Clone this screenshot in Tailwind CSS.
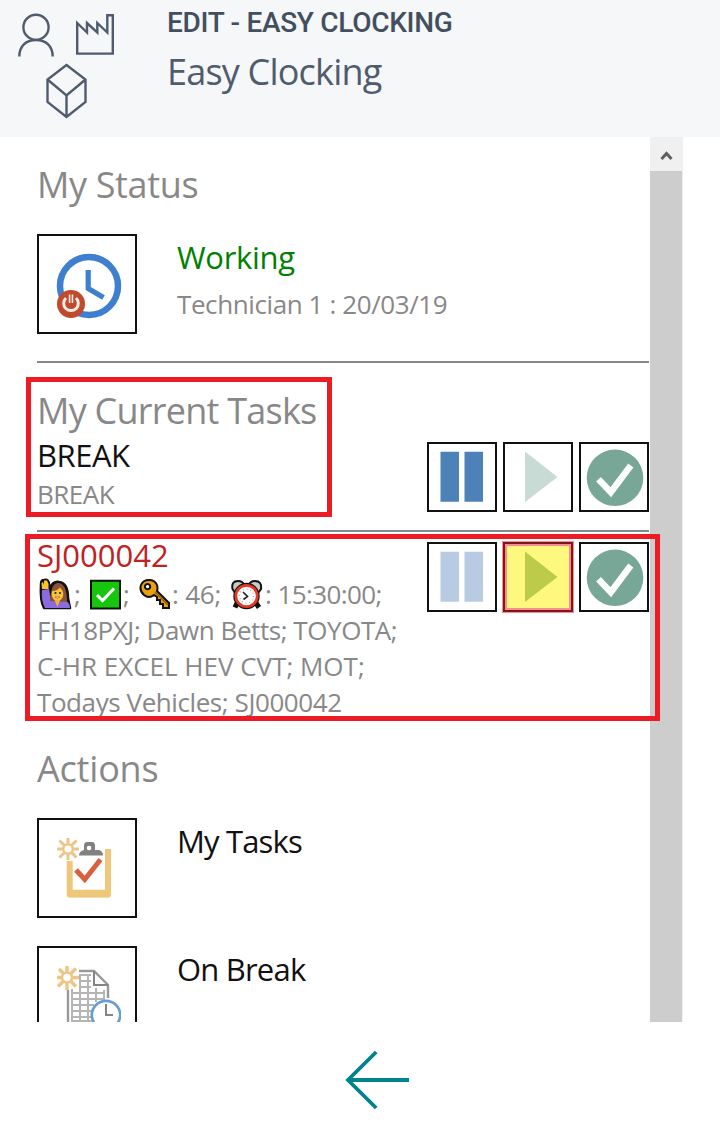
<!DOCTYPE html>
<html lang="en">
<head>
<meta charset="utf-8">
<title>Easy Clocking</title>
<script src="https://cdn.jsdelivr.net/npm/@tailwindcss/browser@4"></script>
</head>
<body class="bg-white">
<div class="relative flex h-[1127px] w-[720px] flex-col overflow-hidden font-['Open_Sans','Noto_Sans',sans-serif] whitespace-nowrap text-[#888]">
  <header class="flex h-[137px] shrink-0 bg-[#f5f7f9]">
    <svg class="w-[167px] shrink-0" height="137" viewBox="0 0 167 137" fill="none" stroke="#505c6d" stroke-width="2.4">
      <circle cx="36" cy="27.3" r="12.6"/><path d="M19.3 56.5C19.3 46 26 40 36 40S52.700 46 52.700 56.500"/>
      <path d="M77.200 53.600V23L87 32.500V23L97.300 32.500V23L107.300 32.500V15.200H112.800V53.600Z"/>
      <path d="M66.500 65L85.500 79.500V102L66.500 117L47.500 102V79.500ZM47.500 79.500L66.500 95.500L85.500 79.500M66.500 95.500V117"/>
    </svg>
    <div class="flex flex-col pt-[7px]">
      <div class="h-[32px] text-[28px] leading-[32px] font-medium tracking-[-0.3px] text-[#434f5f] font-['Roboto',sans-serif]">EDIT - EASY CLOCKING</div>
      <div class="mt-[9px] text-[36px] leading-[48px] tracking-[-0.8px] text-[#505c6d]">Easy Clocking</div>
    </div>
  </header>

  <div class="flex h-[885px] shrink-0 overflow-hidden">
    <main class="ml-[37px] w-[613px] pt-[24px] pr-px">
      <h2 class="text-[36px] leading-[48px] tracking-[-0.35px]">My Status</h2>
      <div class="mt-[25px] flex h-[100px]">
        <div class="size-[100px] border-2 border-[#111]">
          <svg width="96" height="96" viewBox="39 236 96 96" fill="none">
            <circle cx="89" cy="286" r="29" stroke="#3f7fcf" stroke-width="6.500"/>
            <path d="M88.200 270V288.500L103.500 297.500" stroke="#3f7fcf" stroke-width="5.200"/>
            <circle cx="71" cy="304" r="14" fill="#c04a2b"/><path d="M66 298A7.300 7.300 0 1 0 76 298" stroke="#fbeae5" stroke-width="3"/><path d="M71 294.500V303" stroke="#fbeae5" stroke-width="4.500"/><path d="M71 294V304" stroke="#c04a2b" stroke-width="1.300"/>
          </svg>
        </div>
        <div class="ml-[40px]">
          <div class="mt-[2px] text-[31px] leading-[42px] tracking-[-0.3px] text-[#008000]">Working</div>
          <div class="mt-[8px] text-[26px] leading-[36px] tracking-[-0.4px]">Technician 1 : 20/03/19</div>
        </div>
      </div>
      <hr class="mt-[27px] border-0 border-t-2 border-[#888]">

      <h2 class="-mb-px mt-[24px] text-[36px] leading-[48px] tracking-[-0.75px]">My Current Tasks</h2>
      <div class="flex h-[96px] justify-between">
        <div>
          <div class="text-[31px] leading-[42px] tracking-[-0.5px] text-[#111]">BREAK</div>
          <div class="text-[26px] leading-[36px] tracking-[-0.5px]">BREAK</div>
        </div>
        <div class="mt-[8px] flex gap-[6px]">
          <div class="size-[70px] border-2 border-[#111]"><svg width="66" height="66"><path d="M11.500 7.700H30V57.700H11.500ZM35.500 7.700H54V57.700H35.500Z" fill="#4d82b8"/></svg></div>
          <div class="size-[70px] border-2 border-[#111]"><svg width="66" height="66"><path d="M20 7.500L52.500 33L20 58Z" fill="#c8dbd5"/></svg></div>
          <div class="size-[70px] border-2 border-[#111]"><svg width="66" height="66" fill="none"><circle cx="34" cy="33.800" r="28.300" fill="#78a797"/><path d="M17.500 35.300L29.800 48.200L49.800 21.500" stroke="#fff" stroke-width="6.500"/></svg></div>
        </div>
      </div>
      <hr class="border-0 border-t-2 border-[#888]">

      <div class="flex h-[188px] justify-between pt-[2px]">
        <div>
          <div class="text-[31px] leading-[42px] text-[#c02222]">SJ000042</div>
          <div class="text-[26px] leading-[36px]">
            <div class="flex h-[36px]">
              <svg class="w-[37px] shrink-0" height="36" viewBox="37 576 37 36" stroke-linejoin="round">
                <path d="M41 584Q41 580 44 580Q49 579 49 585L50 588Q53 581 59 582Q68 583 68 598L70 608H44Q40 601 41 584Z" fill="#111" stroke="#111" stroke-width="2.500"/>
                <path d="M42 590L49 589L51 601L57 600L66 601Q70 603 70 608H45Q41 601 42 590Z" fill="#8a6be0"/>
                <path d="M42 589L41.500 583L43 582L44 585V580.500H47L48.500 584V589Z" fill="#fcc331"/>
                <path d="M50 601Q51 583 58 583Q67 583 67 602Z" fill="#8b5336"/>
                <ellipse cx="57.500" cy="594" rx="5.800" ry="7" fill="#fcc331"/><path d="M52 591Q58 591 60 587Q61 590 64 591Q62 584 57 585Q52 586 52 591Z" fill="#8b5336"/>
                <path d="M54.500 600H60L57.500 607Z" fill="#f5b52c"/><circle cx="55.500" cy="593" r="1.100" fill="#222"/><circle cx="60" cy="593" r="1.100" fill="#222"/><path d="M55 597Q57.500 600 60 597Z" fill="#fff" stroke="#843" stroke-width=".6"/>
              </svg><span class="w-[16px]">;</span>
              <svg class="w-[32px] shrink-0" height="36" viewBox="90 576 32 36"><path d="M91 580.800H120V608.500H91Z" fill="#16c60c" stroke="#111" stroke-width="2"/><path d="M97 595L102.500 600.500L114 588.500" fill="none" stroke="#fff" stroke-width="3"/></svg>
              <span class="ml-px w-[16px]">;</span>
              <svg class="w-[33px] shrink-0" height="36" viewBox="139 576 33 36"><path fill-rule="evenodd" d="M149 580Q155 580 157 585Q158 588 157 591L169 603V608H163V604H160V600H157V597L154 595Q149 599 144 595Q139 590 141 585Q143 580 149 580ZM147.500 584A2.600 2.600 0 1 0 147.600 584Z" fill="#e8a00e" stroke="#111" stroke-width="2"/><path d="M155 592L168 605" stroke="#935d05" stroke-width="1.500"/></svg>
              <span class="w-[59px] tracking-[-0.2px]">: 46;</span>
              <svg class="w-[32px] shrink-0" height="36" viewBox="231 576 32 36"><path d="M237 603L235 607.500M256 603L259 607.500" stroke="#111" stroke-width="5"/><path d="M232.500 589Q231 581 238 581Q243 581 244 585L235 593ZM261 589Q262 581 255 581Q250 581 249 585L258 593Z" fill="#c9c9c9" stroke="#111" stroke-width="2"/><circle cx="246.500" cy="596" r="10.700" fill="#fff" stroke="#111" stroke-width="5"/><circle cx="246.500" cy="596" r="10.700" fill="#fff" stroke="#e33a24" stroke-width="2.800"/><circle cx="246.500" cy="596" r="7" fill="none" stroke="#aaa" stroke-width="1.200" stroke-dasharray="1 2.660"/><path d="M243 592L247.500 596.500L243.500 599.500" fill="none" stroke="#222" stroke-width="1.600"/></svg>
              <span class="ml-[2px] tracking-[-0.6px]">: 15:30:00;</span>
            </div>
            <div class="tracking-[-0.44px]">FH18PXJ; Dawn Betts; TOYOTA;</div>
            <div>C-HR EXCEL HEV CVT; MOT;</div>
            <div class="tracking-[-0.42px]">Todays Vehicles; SJ000042</div>
          </div>
        </div>
        <div class="mt-[8px] flex gap-[6px]">
          <div class="size-[70px] border-2 border-[#111]"><svg width="66" height="66"><path d="M11.500 7.700H30V57.700H11.500ZM35.500 7.700H54V57.700H35.500Z" fill="#b8cbe3"/></svg></div>
          <div class="relative size-[70px] border-2 border-[#111]"><svg width="66" height="66"><path d="M20 7.500L52.500 33L20 58Z" fill="#79a694"/></svg>
            <div class="absolute -inset-[3px] border-[5px] border-[#ed1c24]/50 bg-[#fff200]/50 bg-clip-padding"></div>
          </div>
          <div class="size-[70px] border-2 border-[#111]"><svg width="66" height="66" fill="none"><circle cx="34" cy="33.800" r="28.300" fill="#78a797"/><path d="M17.500 35.300L29.800 48.200L49.800 21.500" stroke="#fff" stroke-width="6.500"/></svg></div>
        </div>
      </div>

      <h2 class="mt-[25px] text-[36px] leading-[48px] tracking-[-0.2px]">Actions</h2>
      <div class="mt-[25px] flex h-[100px]">
        <div class="size-[100px] border-2 border-[#111]">
          <svg width="96" height="96" viewBox="39 820 96 96" fill="none">
            <path d="M69.700 861V894.500H108V849" stroke="#eec77b" stroke-width="6" stroke-linejoin="round"/><path d="M68 893.500H110" stroke="#eec77b" stroke-width="7.500"/>
            <path d="M79 855.500Q79 851 84 850V846Q84 842 87 842H92Q95 842 95 846V850H99Q103 851 103 855.500Z" fill="#818181"/><circle cx="89" cy="848" r="2.300" fill="#fff"/>
            <path d="M76 870L84.800 879.500L100.500 859.500" stroke="#d9603f" stroke-width="5"/>
            <g stroke="#eec586" stroke-width="3"><circle cx="68" cy="849" r="4.800" stroke-width="2.500"/><path d="M68 838V845M68 853V860M57 849H64M72 849H79M59.500 840.500L65 846M71 852L76.500 857.500M76.500 840.500L71 846M65 852L59.500 857.500"/></g>
          </svg>
        </div>
        <div class="mt-[2px] ml-[40px] text-[31px] leading-[42px] tracking-[-0.85px] text-[#111]">My Tasks</div>
      </div>
      <div class="mt-[28px] flex h-[100px]">
        <div class="size-[100px] border-2 border-[#111]">
          <svg width="96" height="96" viewBox="39 948 96 96" fill="none">
            <path d="M79 971H94L108 985V998M68 990V1026" stroke="#999" stroke-width="2.400"/><path d="M94 971V985H108" stroke="#858585" stroke-width="2"/>
            <path d="M79 975H91M79 981H91M79 987H91M72 993H105M72 999H105M72 1005H94M72 1011H92M72 1017H92M72 1021H92M72 989V1024M80 975V1024M88 975V1024M96 988V1002M104 990V998" stroke="#b5b5b5" stroke-width="2"/>
            <g stroke="#eec586" stroke-width="3.400"><circle cx="67" cy="977.500" r="5" stroke-width="2.500"/><path d="M67 966V973M67 982V990M57 977.500H62M72 977.500H79M59 969L64 974M70.500 981L76 986.500M76 968.500L70.500 974M63.500 981L58 986.500"/></g>
            <circle cx="106" cy="1015" r="14.200" fill="#fff" stroke="#679fd3" stroke-width="2.700"/><path d="M106 1004V1015H113" stroke="#858585" stroke-width="2"/><path d="M121.500 995V1030" stroke="#fff"/>
          </svg>
        </div>
        <div class="mt-[2px] ml-[40px] text-[31px] leading-[42px] tracking-[-0.8px] text-[#111]">On Break</div>
      </div>
    </main>
    <div class="w-[33px] bg-[#f0f0f0]">
      <svg class="block" width="33" height="34"><path d="M11.500 22L16.500 16.500L21.500 22" fill="none" stroke="#606060" stroke-width="3"/></svg>
      <div class="h-[851px] w-[32px] bg-[#cdcdcd]"></div>
    </div>
  </div>

  <footer class="flex h-[105px] items-center pl-[345px]">
    <svg class="mt-[11px]" width="65" height="62" viewBox="345 1049 65 62" fill="none" stroke="#00838a" stroke-width="3.800"><path d="M409 1080H348M376.200 1052L348 1080L376.200 1108"/></svg>
  </footer>

  <div class="absolute top-[377px] left-[26px] h-[140px] w-[306px] border-[5px] border-[#ed1c24]"></div>
  <div class="absolute top-[534px] left-[25px] h-[187px] w-[635px] border-[5px] border-[#ed1c24]"></div>
</div>
</body>
</html>
